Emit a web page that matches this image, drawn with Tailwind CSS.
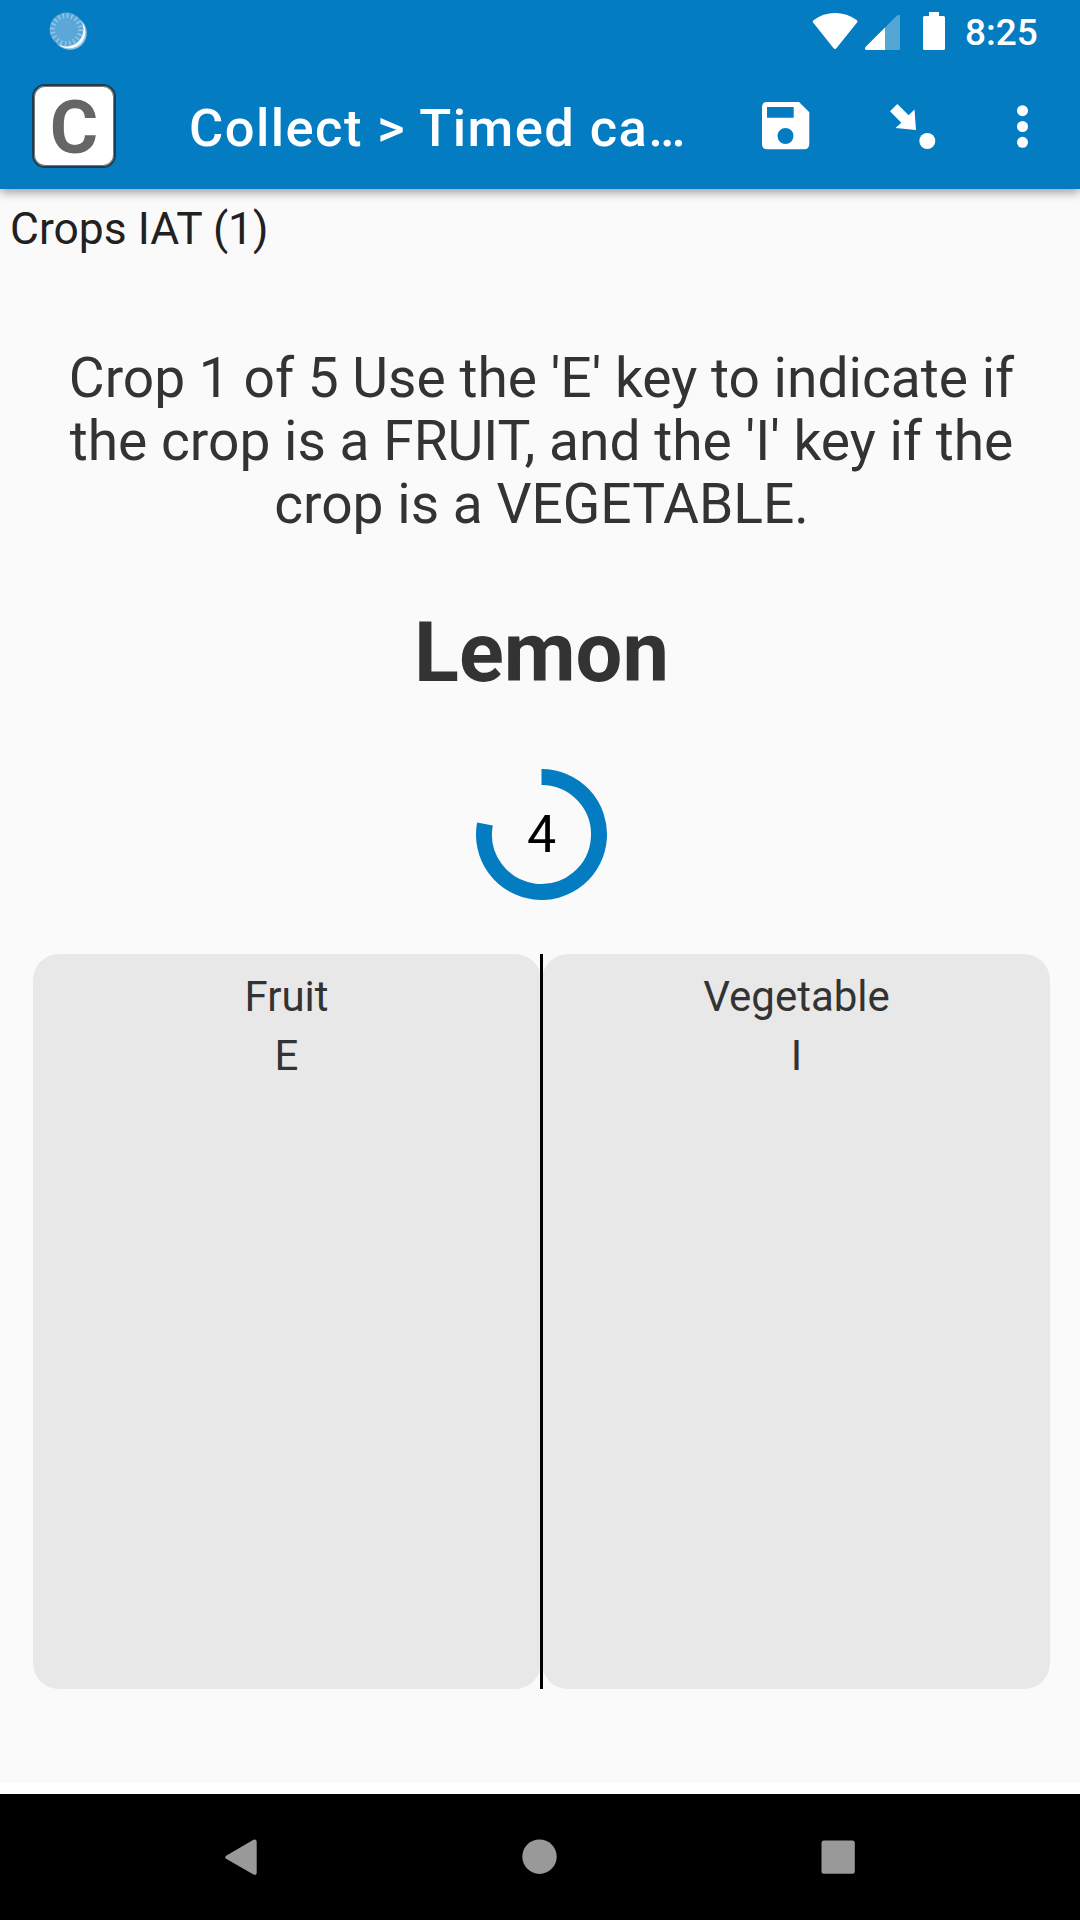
<!DOCTYPE html>
<html lang="en">
<head>
<meta charset="utf-8">
<title>Collect</title>
<script src="https://cdn.jsdelivr.net/npm/@tailwindcss/browser@4"></script>
</head>
<body class="w-[1080px] h-[1920px] overflow-hidden bg-[#fafafa] font-['Roboto',sans-serif] flex flex-col">
<header class="relative h-[189px] shrink-0 bg-[#037cc2] text-white shadow-[0_3px_10px_0_rgba(0,0,0,0.4)]">
  <div class="h-[63px] flex items-start">
    <svg class="ml-[48px] mt-[10px] w-[42px] h-[42px]" viewBox="48 10 42 42">
      <circle cx="70" cy="33" r="16.800" fill="#8ec4e4"/>
      <circle cx="69" cy="32" r="16.300" fill="#fff"/>
      <circle cx="66.500" cy="29.500" r="16.900" fill="#5ba8d8"/>
      <circle cx="66.500" cy="29.500" r="14" fill="none" stroke="#93c6e6" stroke-width="5" stroke-dasharray="1.5 2.898"/>
    </svg>
    <svg class="ml-[720px] mt-[10px] w-[140px] h-[42px]" viewBox="810 10 140 42" fill="#fff">
      <path d="M813.500 20.300Q823 13 835 13T857 20.300Q857.800 21.300 857.200 22.300L836.600 48Q835 49.800 833.400 48L812.900 22.300Q812.300 21.300 813.500 20.300Z"/>
      <path opacity=".32" d="M885 27.500L896.500 16Q898 14.500 900 15V48.500Q900 50 898.500 50H885Z"/>
      <path d="M885 27.500V50H866.500Q864 49.500 865.500 47Z"/>
      <path d="M929 12H939V16H943.500Q945 16 945 17.500V48.500Q945 50 943.500 50H924.500Q923 50 923 48.500V17.500Q923 16 924.500 16H929Z"/>
    </svg>
    <span class="ml-[15px] mt-[11px] text-[37px] leading-[44px] font-medium">8:25</span>
  </div>
  <div class="h-[126px] flex items-start">
    <div class="ml-[32px] mt-[21px] w-[84px] h-[84px] rounded-[13px] border-2 border-[#1d3d50] bg-white flex items-center justify-center pt-[3px] text-[74px] leading-[80px] font-bold text-[#666] shadow-[inset_0_0_0_1px_#777]">C</div>
    <h1 class="ml-[73px] mt-[34px] w-[510px] text-[52.500px] leading-[62px] font-medium tracking-[1.430px] whitespace-nowrap">Collect &gt; Timed ca…</h1>
    <svg class="ml-[50px] mt-[21px] w-[290px] h-[84px]" viewBox="749 84 290 84" fill="#fff">
      <path fill-rule="evenodd" d="M767 102H799L809.300 112.300V144Q809.300 149.300 804 149.300H767.300Q762 149.300 762 144V107Q762 102 767 102ZM767 107V117.700H793.700V107ZM785.500 128A8 8 0 1 0 785.500 144A8 8 0 1 0 785.500 128Z"/>
      <path d="M897.300 104L908.700 115.300L914.500 109.500L916 130L895.500 128L901.300 122.700L890 111.300Z"/>
      <circle cx="927.300" cy="141" r="8"/>
      <circle cx="1022.500" cy="110.700" r="5.500"/><circle cx="1022.500" cy="126.500" r="5.500"/><circle cx="1022.500" cy="142.300" r="5.500"/>
    </svg>
  </div>
</header>
<main class="h-[1594px] shrink-0 pt-[14px] text-[#333]">
  <h2 class="pl-[10px] h-[53px] text-[44.400px] leading-[53px] text-[#212121]">Crops IAT (1)</h2>
  <p class="mt-[91px] ml-[3px] text-center text-[55.125px] leading-[63px] whitespace-nowrap">Crop 1 of 5 Use the 'E' key to indicate if<br>the crop is a FRUIT, and the 'I' key if the<br>crop is a VEGETABLE.</p>
  <p class="mt-[68px] ml-[3px] text-center text-[83px] leading-[98px] font-bold">Lemon</p>
  <div class="mt-[67px] ml-[476px] w-[131px] h-[131px] grid place-items-center">
    <svg class="col-start-1 row-start-1 w-[131px] h-[131px]" viewBox="-65.500 -65.500 131 131"><path d="M0 -57.500A57.500 57.500 0 1 1 -56.540 -10.480" fill="none" stroke="#037cc2" stroke-width="16"/></svg>
    <span class="col-start-1 row-start-1 text-[52px] leading-[62px] text-black">4</span>
  </div>
  <div class="mt-[54px] ml-[33px] mr-[30px] h-[735px] flex text-center text-[42px] leading-[59px]">
    <div class="w-[508px] rounded-[26px] bg-[#e8e8e8] pt-[13px] pr-px"><p>Fruit</p><p>E</p></div>
    <div class="relative -mx-px w-[3px] bg-black"></div>
    <div class="w-[508px] rounded-[26px] bg-[#e8e8e8] pt-[13px] pl-px"><p>Vegetable</p><p>I</p></div>
  </div>
</main>
<div class="h-[11px] shrink-0 bg-white"></div>
<nav class="h-[126px] shrink-0 bg-black">
  <svg class="w-[1080px] h-[126px]" viewBox="0 1794 1080 126" fill="#999">
    <path d="M226.500 1855.500L253.500 1839.800Q256.700 1838.500 256.700 1842V1872.500Q256.700 1876 253.500 1874.500L226.500 1859Q224 1857.200 226.500 1855.500Z"/>
    <circle cx="539.500" cy="1856.700" r="17.200"/>
    <rect x="821.500" y="1840.500" width="33.300" height="33.300" rx="2.500"/>
  </svg>
</nav>
</body>
</html>
